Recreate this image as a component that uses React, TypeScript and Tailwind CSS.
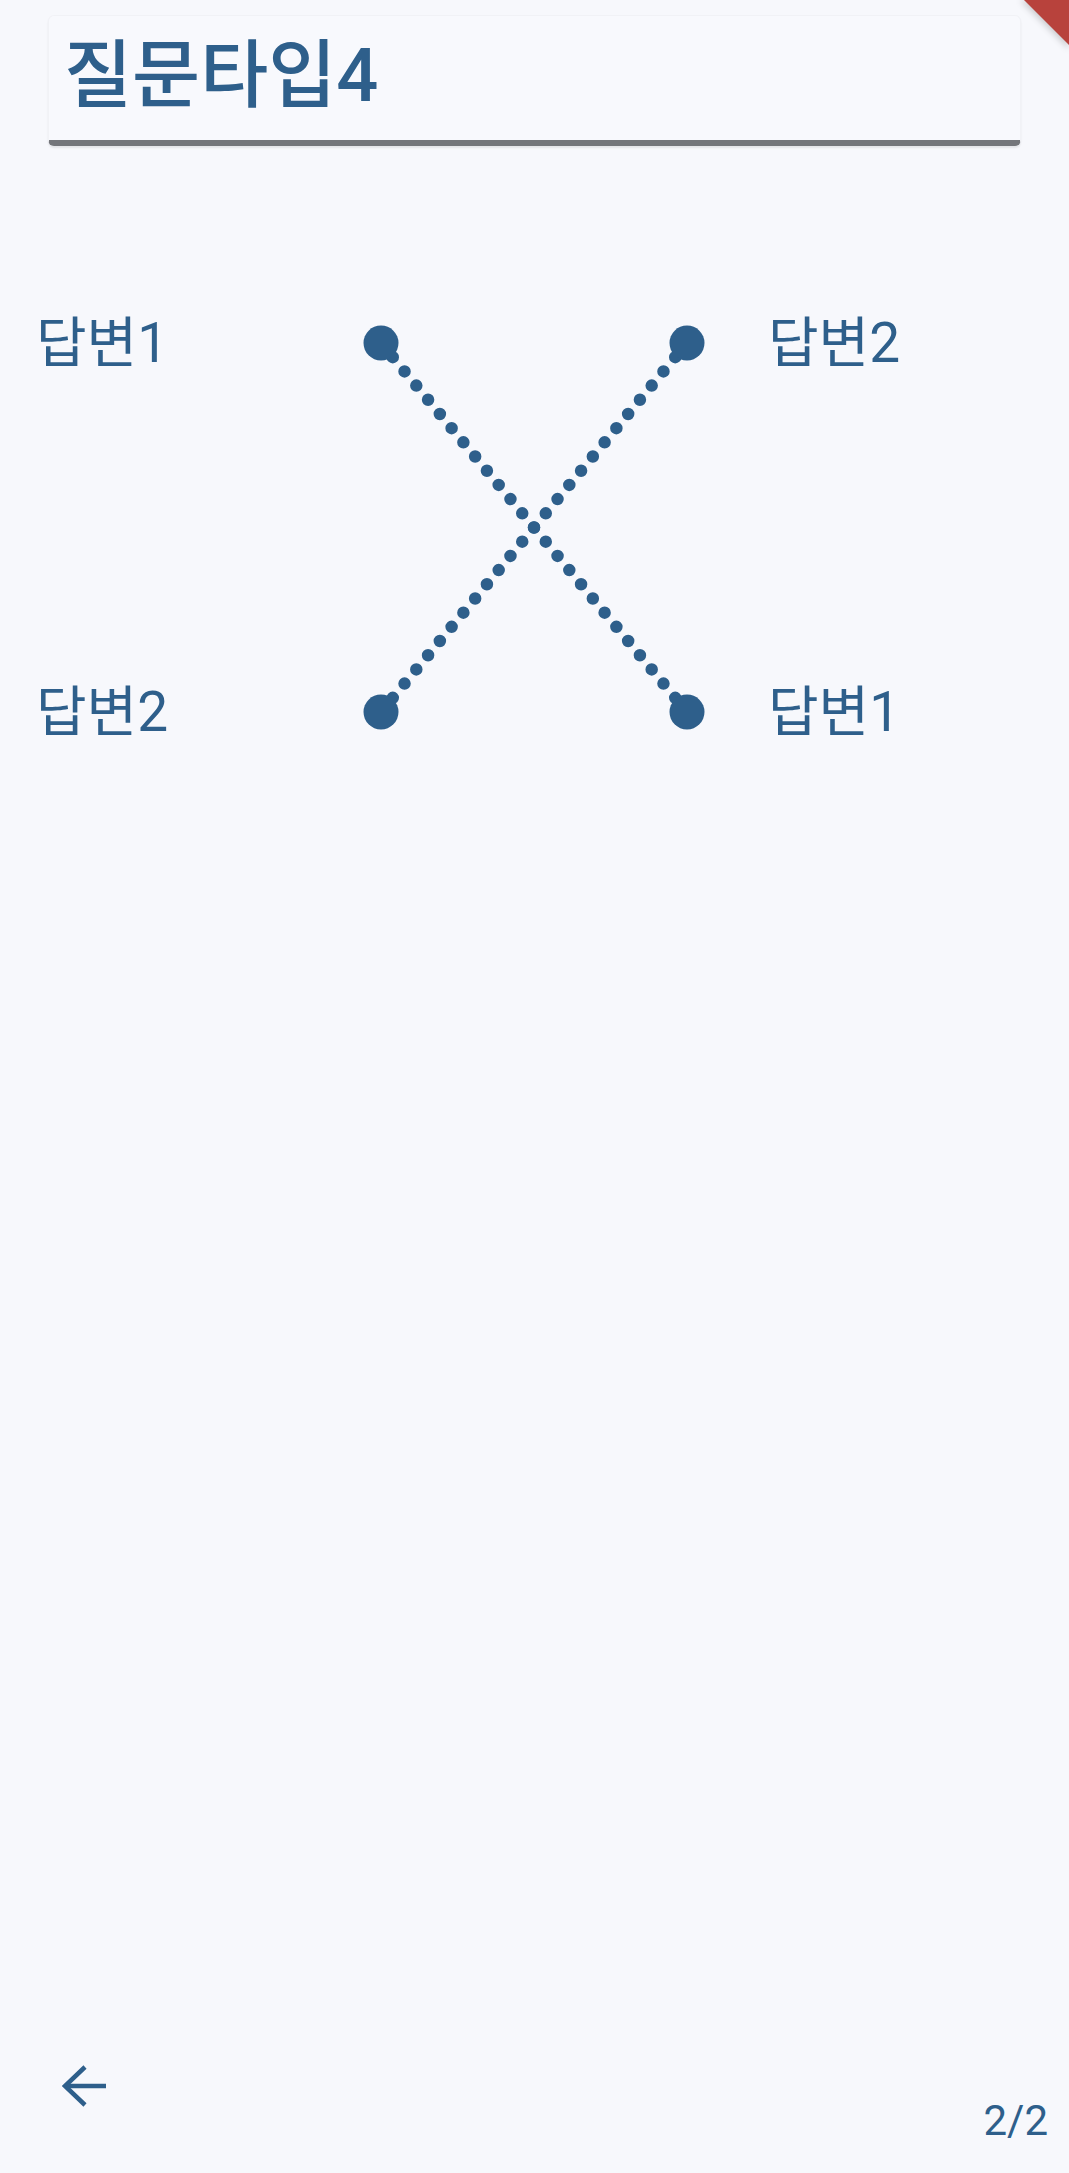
import React from "react";

const BLUE = "#2e5f8b";

// 점선 매칭 라인 (큰 점 중심에서 중심까지)
function DottedLine({ x1, y1, x2, y2 }: { x1: number; y1: number; x2: number; y2: number }) {
  const len = Math.hypot(x2 - x1, y2 - y1);
  const gap = len / 26;
  return (
    <line
      x1={x1}
      y1={y1}
      x2={x2}
      y2={y2}
      stroke={BLUE}
      strokeWidth={12.5}
      strokeLinecap="round"
      strokeDasharray={`0 ${gap}`}
    />
  );
}

function Label({ text }: { text: string }) {
  return (
    <div className="h-[60px] flex items-center text-[55px] leading-none text-[#2e5f8b] whitespace-nowrap">
      {text}
    </div>
  );
}

export default function App() {
  return (
    <div
      className="relative w-full h-[2173px] overflow-hidden bg-[#f7f8fc] flex flex-col"
      style={{ fontFamily: 'Roboto, "Noto Sans CJK KR", sans-serif' }}
    >
      {/* 질문 제목 */}
      <div className="mx-[48px] mt-[15px] h-[131px] rounded-md bg-[#f8f9fd] border border-[#f1f2f6] border-b-[6px] border-b-[#74767b] shadow-[0_2px_2px_rgba(0,0,0,0.08)] flex items-center pl-[15px] pb-[4px]">
        <h1 className="text-[74px] leading-none font-medium text-[#2e5f8b]">질문타입4</h1>
      </div>

      {/* 답변 매칭 영역 */}
      <div className="mt-[167px] flex">
        <div className="w-[355px] pl-[36px] flex flex-col gap-[309px]">
          <Label text="답변1" />
          <Label text="답변2" />
        </div>
        <svg width={360} height={430} viewBox="355 313 360 430" className="shrink-0">
          <DottedLine x1={381} y1={343} x2={687} y2={712} />
          <DottedLine x1={687} y1={343} x2={381} y2={712} />
          <circle cx={381} cy={343} r={17.5} fill={BLUE} />
          <circle cx={687} cy={343} r={17.5} fill={BLUE} />
          <circle cx={381} cy={712} r={17.5} fill={BLUE} />
          <circle cx={687} cy={712} r={17.5} fill={BLUE} />
        </svg>
        <div className="pl-[53px] flex flex-col gap-[309px]">
          <Label text="답변2" />
          <Label text="답변1" />
        </div>
      </div>

      {/* 하단 네비게이션 */}
      <div className="mt-auto flex items-end justify-between pl-[62px] pr-[21px] pb-[31px]">
        <button className="mb-[34px] w-[46px] h-[44px] flex items-center justify-center">
          <svg width={46} height={44} viewBox="0 0 46 44">
            <polyline points="23,3 3,22 23,41" fill="none" stroke={BLUE} strokeWidth={4.5} />
            <line x1={4} y1={22} x2={44} y2={22} stroke={BLUE} strokeWidth={4.5} />
          </svg>
        </button>
        <span className="text-[42px] leading-none text-[#2e5f8b]">2/2</span>
      </div>

      {/* 디버그 배너 */}
      <svg className="absolute top-0 right-0" width={60} height={60} viewBox="0 0 60 60">
        <defs>
          <filter id="bshadow" x="-50%" y="-50%" width="200%" height="200%">
            <feGaussianBlur stdDeviation="3" />
          </filter>
        </defs>
        <polygon points="11,0 60,0 60,49" fill="rgba(0,0,0,0.18)" filter="url(#bshadow)" />
        <polygon points="15,0 60,0 60,45" fill="#b8423c" />
      </svg>
    </div>
  );
}
